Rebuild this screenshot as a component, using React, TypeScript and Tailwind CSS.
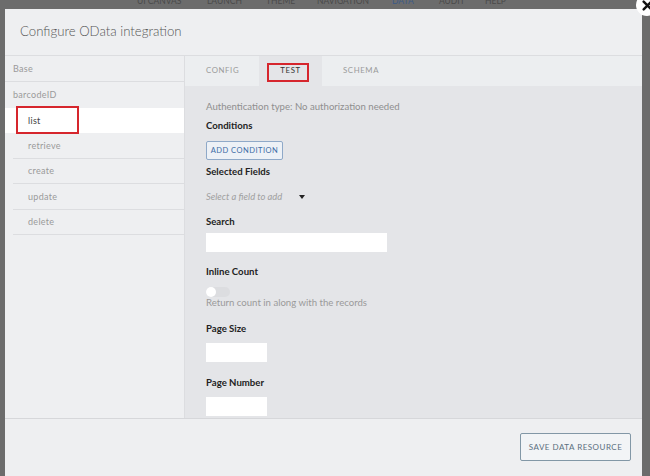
import React from "react";

const navItems = [
  { t: "UI CANVAS", x: "ml-[137px] w-[46px]", c: "text-[#4a4a4a]" },
  { t: "LAUNCH", x: "ml-[24px] w-[33px]", c: "text-[#4a4a4a]" },
  { t: "THEME", x: "ml-[26px] w-[26px]", c: "text-[#4a4a4a]" },
  { t: "NAVIGATION", x: "ml-[25px] w-[50px]", c: "text-[#4a4a4a]" },
  { t: "DATA", x: "ml-[25px] w-[25px]", c: "text-[#3d5a86]" },
  { t: "AUDIT", x: "ml-[22px] w-[22px]", c: "text-[#4a4a4a]" },
  { t: "HELP", x: "ml-[24px] w-[22px]", c: "text-[#4a4a4a]" },
];

const subItems = ["retrieve", "create", "update", "delete"];

export default function App() {
  return (
    <div
      className="relative w-[650px] h-[476px] overflow-hidden bg-[#6c6c6c]"
      style={{ fontFamily: "Lato, 'Noto Sans', sans-serif" }}
    >
      {/* background nav (under overlay) */}
      <div className="absolute left-0 top-[-5px] flex text-[8.5px] whitespace-nowrap">
        {navItems.map((n) => (
          <span key={n.t} className={`${n.x} ${n.c}`}>
            {n.t}
          </span>
        ))}
      </div>

      {/* modal */}
      <div className="relative ml-[5px] mt-[9px] w-[637px] h-[480px] bg-[#eeeff1] flex flex-col">
        {/* header */}
        <div className="h-[47px] shrink-0 border-b border-[#dcdde0] flex items-center pl-[15px]">
          <span className="text-[13.2px] font-light text-[#555] mt-[-1px]">
            Configure OData integration
          </span>
        </div>

        {/* body */}
        <div className="flex h-[362px] shrink-0">
          {/* sidebar */}
          <div className="w-[180px] shrink-0 border-r border-[#dcdde0] bg-[#eeeff1]">
            <div className="h-[26px] border-b border-[#dcdde0] flex items-center pl-[8px] text-[9px] text-[#9a9a9a] tracking-[0.3px]">
              Base
            </div>
            <div className="h-[26px] flex items-center pl-[8px] text-[9px] text-[#9a9a9a] tracking-[0.3px]">
              barcodeID
            </div>
            <div className="relative h-[25px] bg-white flex items-center pl-[23px] text-[9px] text-[#444] tracking-[0.3px]">
              list
              <div className="absolute left-[11px] top-[-2px] w-[63px] h-[28px] border-[2.5px] border-[#d6262d]" />
            </div>
            {subItems.map((s) => (
              <div
                key={s}
                className="ml-[8px] h-[25.5px] border-b border-[#dcdde0] flex items-center pl-[15px] text-[9px] text-[#9a9a9a] tracking-[0.3px]"
              >
                {s}
              </div>
            ))}
          </div>

          {/* right panel */}
          <div className="flex-1 bg-[#e4e5e8] flex flex-col overflow-hidden">
            {/* tabs */}
            <div className="h-[30px] shrink-0 bg-[#eceef0] flex items-stretch pl-[21px] text-[7.8px] tracking-[0.6px]">
              <div className="w-[53px] flex items-center text-[#9a9a9a]">CONFIG</div>
              <div className="relative w-[63px] bg-[#e4e5e8] flex items-center justify-center text-[#333]">
                <span>TEST</span>
                <div className="absolute left-[8px] top-[7px] w-[42px] h-[19px] border-[2.5px] border-[#d6262d]" />
              </div>
              <div className="ml-[21px] flex items-center text-[#9a9a9a]">SCHEMA</div>
            </div>

            {/* content */}
            <div className="pl-[21px] pt-[15px] flex flex-col text-[9.6px]">
              <div className="text-[#8f8f8f] leading-[12px]">
                Authentication type: No authorization needed
              </div>
              <div className="mt-[7px] font-bold text-[#222] leading-[12px]">Conditions</div>
              <div className="mt-[9px] flex">
                <div className="h-[19px] w-[77px] flex items-center justify-center border border-[#8fa9c8] bg-[#edf1f6] rounded-[2px] text-[7.5px] tracking-[0.5px] text-[#3c6ba5]">
                  ADD CONDITION
                </div>
              </div>
              <div className="mt-[6px] font-bold text-[#222] leading-[12px]">Selected Fields</div>
              <div className="mt-[13px] flex items-center text-[#a0a0a0] italic text-[9.4px] leading-[12px]">
                Select a field to add
                <span className="ml-[17px] w-0 h-0 border-l-[3px] border-r-[3px] border-t-[4px] border-l-transparent border-r-transparent border-t-[#222]" />
              </div>
              <div className="mt-[13px] font-bold text-[#222] leading-[12px]">Search</div>
              <div className="mt-[5px] w-[181px] h-[19px] bg-white" />
              <div className="mt-[14px] font-bold text-[#222] leading-[12px]">Inline Count</div>
              <div className="mt-[9px] relative w-[24px] h-[10px] rounded-full bg-[#dcdde0]">
                <div className="absolute left-0 top-0 w-[10px] h-[10px] rounded-full bg-white" />
              </div>
              <div className="mt-[0px] text-[#9a9a9a] leading-[12px]">
                Return count in along with the records
              </div>
              <div className="mt-[14px] font-bold text-[#222] leading-[12px]">Page Size</div>
              <div className="mt-[8px] w-[61px] h-[19px] bg-white" />
              <div className="mt-[15px] font-bold text-[#222] leading-[12px]">Page Number</div>
              <div className="mt-[8px] w-[61px] h-[19px] bg-white" />
            </div>
          </div>
        </div>

        {/* footer */}
        <div className="flex-1 border-t border-[#d6d7da] bg-[#eeeff1] flex justify-end pr-[11px] pt-[14px]">
          <div className="h-[28px] w-[111px] flex items-center justify-center border border-[#8297a6] rounded-[2px] bg-[#f2f4f6] text-[8px] tracking-[0.5px] text-[#5b6f7e]">
            SAVE DATA RESOURCE
          </div>
        </div>
      </div>

      {/* close button */}
      <div className="absolute left-[636px] top-[-6px] w-[22px] h-[22px] rounded-full bg-white flex items-center justify-center">
        <svg width="11" height="11" viewBox="0 0 10 10">
          <path d="M1.5 1.5 L8.5 8.5 M8.5 1.5 L1.5 8.5" stroke="#111" strokeWidth="2.2" strokeLinecap="round" />
        </svg>
      </div>
    </div>
  );
}
